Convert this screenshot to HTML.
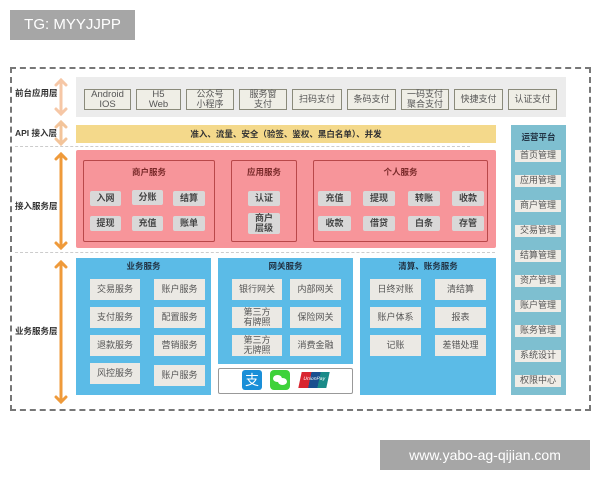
<!DOCTYPE html>
<html><head><meta charset="utf-8"><style>
*{margin:0;padding:0;box-sizing:border-box}
body{width:600px;height:480px;background:#fff;position:relative;overflow:hidden;font-family:"Liberation Sans","Noto Sans CJK SC",sans-serif}
.a{position:absolute}
.c{position:absolute;display:flex;align-items:center;justify-content:center;text-align:center;line-height:1.05}
.f{background:#efeee6;border:1px solid #8a8a7a;font-size:9px;color:#555}
.lbl{font-size:8.5px;font-weight:bold;color:#333}
.chip{background:#d9d8d8;font-size:9px;font-weight:bold;color:#444;border-radius:2px}
.blue{background:#5bbbe7}
.bi{background:#ebe9e4;font-size:9px;color:#555}
.bt{font-size:8.5px;font-weight:bold;color:#234;}
.op{background:#efece6;font-size:9px;color:#555}
</style></head><body>
<div class="c" style="left:10px;top:10px;width:125px;height:30px;background:#a6a6a6;color:#fff;font-size:15px">TG: MYYJJPP</div>

<div class="a" style="left:10px;top:67px;width:581px;height:344px;border:2px dashed #777"></div>

<div class="a lbl" style="left:15px;top:87px">前台应用层</div>
<div class="a lbl" style="left:15px;top:127px">API 接入层</div>
<div class="a lbl" style="left:15px;top:200px">接入服务层</div>
<div class="a lbl" style="left:15px;top:325px">业务服务层</div>

<svg class="a" style="left:52px;top:76px" width="20" height="330">
<g stroke-width="3" fill="none" stroke-linecap="round">
<path d="M9 4V38M4 9L9 4L14 9M4 33L9 38L14 33" stroke="#f6c7a6"/>
<path d="M9 46V68M4 51L9 46L14 51M4 63L9 68L14 63" stroke="#f3c49a"/>
<path d="M9 78V172M4 83L9 78L14 83M4 167L9 172L14 167" stroke="#ef9a3a"/>
<path d="M9 186V326M4 191L9 186L14 191M4 321L9 326L14 321" stroke="#ef9a3a"/>
</g></svg>

<div class="a" style="left:76px;top:77px;width:490px;height:40px;background:#ececec"></div>
<div class="c f" style="left:84px;top:89px;width:47px;height:21px;font-size:9.5px">Android<br>IOS</div>
<div class="c f" style="left:136px;top:89px;width:45px;height:21px;font-size:9.5px">H5<br>Web</div>
<div class="c f" style="left:186px;top:89px;width:48px;height:21px">公众号<br>小程序</div>
<div class="c f" style="left:239px;top:89px;width:48px;height:21px">服务窗<br>支付</div>
<div class="c f" style="left:292px;top:89px;width:50px;height:21px">扫码支付</div>
<div class="c f" style="left:347px;top:89px;width:49px;height:21px">条码支付</div>
<div class="c f" style="left:401px;top:89px;width:48px;height:21px">一码支付<br>聚合支付</div>
<div class="c f" style="left:454px;top:89px;width:49px;height:21px">快捷支付</div>
<div class="c f" style="left:508px;top:89px;width:49px;height:21px">认证支付</div>

<div class="c" style="left:76px;top:125px;width:420px;height:18px;background:#f4d98b;font-size:8.5px;font-weight:bold;color:#333">准入、流量、安全（验签、鉴权、黑白名单）、并发</div>
<div class="a" style="left:15px;top:146px;width:455px;border-top:1px dashed #ccc"></div>
<div class="a" style="left:15px;top:252px;width:480px;border-top:1px dashed #ccc"></div>

<div class="a" style="left:76px;top:150px;width:420px;height:98px;background:#f7959a;border-radius:2px"></div>
<div class="a" style="left:83px;top:160px;width:132px;height:82px;border:1px solid #b9484a;border-radius:2px"></div>
<div class="a" style="left:231px;top:160px;width:66px;height:82px;border:1px solid #b9484a;border-radius:2px"></div>
<div class="a" style="left:313px;top:160px;width:175px;height:82px;border:1px solid #b9484a;border-radius:2px"></div>
<div class="c bt" style="left:83px;top:168px;width:132px;color:#7a2a2a">商户服务</div>
<div class="c bt" style="left:231px;top:168px;width:66px;color:#7a2a2a">应用服务</div>
<div class="c bt" style="left:313px;top:168px;width:175px;color:#7a2a2a">个人服务</div>
<div class="c chip" style="left:90px;top:191px;width:31px;height:15px">入网</div>
<div class="c chip" style="left:132px;top:190px;width:31px;height:15px">分账</div>
<div class="c chip" style="left:173px;top:191px;width:32px;height:15px">结算</div>
<div class="c chip" style="left:90px;top:216px;width:31px;height:15px">提现</div>
<div class="c chip" style="left:132px;top:216px;width:31px;height:15px">充值</div>
<div class="c chip" style="left:173px;top:216px;width:32px;height:15px">账单</div>
<div class="c chip" style="left:248px;top:191px;width:32px;height:15px">认证</div>
<div class="c chip" style="left:248px;top:213px;width:32px;height:21px">商户<br>层级</div>
<div class="c chip" style="left:318px;top:191px;width:33px;height:15px">充值</div>
<div class="c chip" style="left:363px;top:191px;width:32px;height:15px">提现</div>
<div class="c chip" style="left:408px;top:191px;width:32px;height:15px">转账</div>
<div class="c chip" style="left:452px;top:191px;width:32px;height:15px">收款</div>
<div class="c chip" style="left:318px;top:216px;width:33px;height:15px">收款</div>
<div class="c chip" style="left:363px;top:216px;width:32px;height:15px">借贷</div>
<div class="c chip" style="left:408px;top:216px;width:32px;height:15px">白条</div>
<div class="c chip" style="left:452px;top:216px;width:32px;height:15px">存管</div>

<div class="a" style="left:511px;top:125px;width:55px;height:270px;background:#7ebfd0"></div>
<div class="c bt" style="left:511px;top:131px;width:55px;height:12px;color:#234">运营平台</div>
<div class="c op" style="left:515px;top:150px;width:46px;height:12px">首页管理</div>
<div class="c op" style="left:515px;top:175px;width:46px;height:12px">应用管理</div>
<div class="c op" style="left:515px;top:200px;width:46px;height:12px">商户管理</div>
<div class="c op" style="left:515px;top:225px;width:46px;height:12px">交易管理</div>
<div class="c op" style="left:515px;top:250px;width:46px;height:12px">结算管理</div>
<div class="c op" style="left:515px;top:275px;width:46px;height:12px">资产管理</div>
<div class="c op" style="left:515px;top:300px;width:46px;height:12px">账户管理</div>
<div class="c op" style="left:515px;top:325px;width:46px;height:12px">账务管理</div>
<div class="c op" style="left:515px;top:350px;width:46px;height:12px">系统设计</div>
<div class="c op" style="left:515px;top:375px;width:46px;height:12px">权限中心</div>

<div class="a blue" style="left:76px;top:258px;width:135px;height:137px"></div>
<div class="c bt" style="left:76px;top:262px;width:135px">业务服务</div>
<div class="c bi" style="left:90px;top:279px;width:50px;height:21px">交易服务</div>
<div class="c bi" style="left:154px;top:279px;width:51px;height:21px">账户服务</div>
<div class="c bi" style="left:90px;top:307px;width:50px;height:21px">支付服务</div>
<div class="c bi" style="left:154px;top:307px;width:51px;height:21px">配置服务</div>
<div class="c bi" style="left:90px;top:335px;width:50px;height:21px">退款服务</div>
<div class="c bi" style="left:154px;top:335px;width:51px;height:21px">营销服务</div>
<div class="c bi" style="left:90px;top:363px;width:50px;height:21px">风控服务</div>
<div class="c bi" style="left:154px;top:365px;width:51px;height:21px">账户服务</div>

<div class="a blue" style="left:218px;top:258px;width:135px;height:106px"></div>
<div class="c bt" style="left:218px;top:262px;width:135px">网关服务</div>
<div class="c bi" style="left:232px;top:279px;width:50px;height:21px">银行网关</div>
<div class="c bi" style="left:290px;top:279px;width:51px;height:21px">内部网关</div>
<div class="c bi" style="left:232px;top:307px;width:50px;height:21px">第三方<br>有牌照</div>
<div class="c bi" style="left:290px;top:307px;width:51px;height:21px">保险网关</div>
<div class="c bi" style="left:232px;top:335px;width:50px;height:21px">第三方<br>无牌照</div>
<div class="c bi" style="left:290px;top:335px;width:51px;height:21px">消费金融</div>
<div class="a" style="left:218px;top:368px;width:135px;height:26px;border:1px solid #999;border-radius:2px;background:#fff"></div>
<div class="c" style="left:242px;top:370px;width:20px;height:20px;background:#1a8fd8;border-radius:3px;color:#fff;font-size:14px">支</div>
<div class="a" style="left:270px;top:370px;width:20px;height:20px;background:#3ed23a;border-radius:4px"><div class="a" style="left:3px;top:5px;width:9px;height:7px;background:#fff;border-radius:50%"></div><div class="a" style="left:8px;top:8px;width:9px;height:7px;background:#fff;border-radius:50%"></div></div>
<div class="c" style="left:300px;top:372px;width:28px;height:16px;background:linear-gradient(90deg,#d8252f 0 35%,#1a4f8f 35% 68%,#1a8a88 68%);transform:skewX(-12deg);color:#fff;font-size:5px">UnionPay</div>

<div class="a blue" style="left:360px;top:258px;width:136px;height:137px"></div>
<div class="c bt" style="left:360px;top:262px;width:136px">清算、账务服务</div>
<div class="c bi" style="left:370px;top:279px;width:51px;height:21px">日终对账</div>
<div class="c bi" style="left:435px;top:279px;width:51px;height:21px">清结算</div>
<div class="c bi" style="left:370px;top:307px;width:51px;height:21px">账户体系</div>
<div class="c bi" style="left:435px;top:307px;width:51px;height:21px">报表</div>
<div class="c bi" style="left:370px;top:335px;width:51px;height:21px">记账</div>
<div class="c bi" style="left:435px;top:335px;width:51px;height:21px">差错处理</div>

<div class="c" style="left:380px;top:440px;width:210px;height:30px;background:#a6a6a6;color:#fff;font-size:14px">www.yabo-ag-qijian.com</div>
</body></html>
